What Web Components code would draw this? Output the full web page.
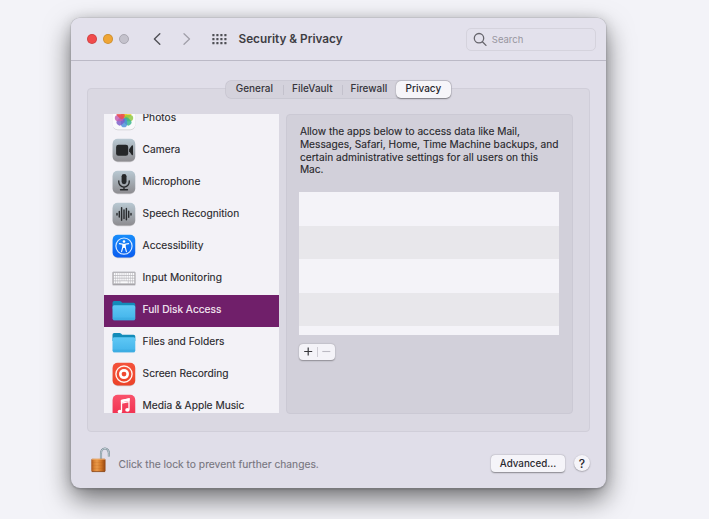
<!DOCTYPE html>
<html lang="en"><head><meta charset="utf-8"><title>Security &amp; Privacy</title>
<style>
html,body{margin:0;height:100%}
body{background:#f3f3f8;font-family:Inter,"Liberation Sans",sans-serif;overflow:hidden;padding:18px 0 0 71px;box-sizing:border-box;color:#29282e}
</style></head><body>
<prefs-window>
  <window-toolbar slot="toolbar" heading="Security &amp; Privacy"></window-toolbar>
  <tab-bar slot="tabs">
    <tab-item style="width:57px">General</tab-item>
    <tab-item style="width:59px" line>FileVault</tab-item>
    <tab-item style="width:54px" line>Firewall</tab-item>
    <tab-item style="width:55px" selected>Privacy</tab-item>
  </tab-bar>
  <side-list slot="side">
    <side-row icon="photos">Photos</side-row>
    <side-row icon="camera">Camera</side-row>
    <side-row icon="mic">Microphone</side-row>
    <side-row icon="speech">Speech Recognition</side-row>
    <side-row icon="access">Accessibility</side-row>
    <side-row icon="keyboard">Input Monitoring</side-row>
    <side-row icon="folder" selected>Full Disk Access</side-row>
    <side-row icon="folder">Files and Folders</side-row>
    <side-row icon="record">Screen Recording</side-row>
    <side-row icon="music">Media &amp; Apple Music</side-row>
  </side-list>
  <detail-pane slot="detail">Allow the apps below to access data like Mail,<br>Messages, Safari, Home, Time Machine backups, and<br>certain administrative settings for all users on this<br>Mac.</detail-pane>
  <window-footer slot="footer">Click the lock to prevent further changes.</window-footer>
</prefs-window>
<script>
const define=(name,html)=>customElements.define(name,class extends HTMLElement{
  connectedCallback(){
    if(this.shadowRoot)return;
    const root=this.attachShadow({mode:'open'});
    root.innerHTML=typeof html==='function'?html(this):html;
  }
});

const tile=(id,a,b,inner)=>`<svg width="24" height="25" viewBox="0 0 24 25"><defs><linearGradient id="${id}" x2="0" y2="1"><stop stop-color="${a}"/><stop offset="1" stop-color="${b}"/></linearGradient></defs><rect x=".8" y="1.6" width="22.4" height="22.7" rx="5" fill="#000" opacity=".16"/><rect x=".6" y=".8" width="22.6" height="22.6" rx="5" fill="url(#${id})"/>${inner}</svg>`;
const petals=['#f6a623','#e8d22e','#8cc63f','#35b58a','#4a90d9','#7a5cc8','#c05bb0','#ee4b4b'];
const keys=()=>{let s='';for(let r=0;r<4;r++)for(let c=0;c<10;c++){if(r===3&&c>2&&c<7)continue;s+=`<rect x="${(1.9+c*2.08).toFixed(2)}" y="${(7+r*2.75).toFixed(2)}" width="1.6" height="2" rx=".3"/>`}return s+'<rect x="8.2" y="15.25" width="7.7" height="2" rx=".3"/>'};
const icons={
  photos:()=>tile('g','#ffffff','#f8f8fa',`<g>${petals.map((c,i)=>`<rect x="8.9" y="2.9" width="6.2" height="9" rx="3.1" fill="${c}" opacity=".82" transform="rotate(${i*45} 12 12.1)"/>`).join('')}</g>`),
  camera:()=>tile('g','#b9c9d3','#8d8c90','<rect x="4.1" y="6.7" width="12.1" height="11" rx="2.3" fill="#252729"/><path d="M17.1 11.2 19.8 7.5Q21 6.7 21 8.2V16.2Q21 17.7 19.8 16.9L17.1 13.3Z" fill="#252729"/>'),
  mic:()=>tile('g','#b9c9d3','#8d8c90','<rect x="9.6" y="3.9" width="4.9" height="10.4" rx="2.45" fill="#252729"/><path d="M6.8 10.8v1.1a5.2 5.2 0 0 0 10.4 0v-1.1M12 17.2v2.4M8.5 19.7h7" fill="none" stroke="#252729" stroke-width="1.35" stroke-linecap="round"/>'),
  speech:()=>tile('g','#b9c9d3','#8d8c90','<path d="M5 11.4v1.6M7.3 9.4v5.6M9.6 5.6v12.6M12 8v8.6M14.4 6.4v11.4M16.7 9.2v6M19 11.4v1.6" fill="none" stroke="#292b2e" stroke-width="1.45" stroke-linecap="round"/>'),
  access:()=>tile('g','#188dfa','#0a5df0','<circle cx="12" cy="12.1" r="8.1" fill="none" stroke="#d8eaff" stroke-width="1.2"/><circle cx="12" cy="7.5" r="1.3" fill="#fff"/><path d="M7.4 9.6 10.9 10.3V12.7L9.6 17.6M16.6 9.6 13.1 10.3V12.7L14.4 17.6" fill="none" stroke="#fff" stroke-width="1.1" stroke-linecap="round"/><path d="M10.7 9.9h2.6v4h-2.6z" fill="#fff"/>'),
  keyboard:()=>`<svg width="24" height="25" viewBox="0 0 24 25"><rect x=".6" y="5.9" width="22.7" height="12.7" rx=".8" fill="#b9b8bd" stroke="#b0afb4" stroke-width=".6"/><path d="M.6 18.8h22.7" stroke="#929196" stroke-width=".8"/><g fill="#fafafc">${keys()}</g></svg>`,
  folder:()=>`<svg width="24" height="25" viewBox="0 0 24 25"><defs><linearGradient id="f" x2="0" y2="1"><stop stop-color="#5fc8f5"/><stop offset="1" stop-color="#42b3ea"/></linearGradient></defs><path d="M.5 4.7Q.5 3 2.2 3H7.6Q8.4 3 9 3.6L10.2 4.7H21.5Q23.3 4.7 23.3 6.5V11H.5Z" fill="#138bb9"/><path d="M.5 8.9Q.5 7.2 2.3 7.2H21.6Q23.3 7.2 23.3 8.9V20.6Q23.3 22.3 21.6 22.3H2.2Q.5 22.3.5 20.6Z" fill="url(#f)"/><path d="M.8 20.2h22.3M1 21.9h21.8" stroke="#319fd2" stroke-width=".5"/></svg>`,
  record:()=>tile('g','#f4523b','#ec4329','<circle cx="12" cy="12.1" r="8.1" fill="none" stroke="#fff3ee" stroke-width="1.4"/><circle cx="12" cy="12.1" r="5" fill="#fff"/><circle cx="12" cy="12.1" r="2.4" fill="#f0482f"/>'),
  music:()=>tile('g','#f9536c','#f02c4c','<path d="M9.5 17.3V6.5L17 4.9V15.6M9.5 9.2 17 7.6" fill="none" stroke="#fff" stroke-width="1.3"/><path d="M8.9 5.9 17.6 4.2V6.7L8.9 8.4Z" fill="#fff"/><ellipse cx="7.9" cy="17.5" rx="2.2" ry="1.8" fill="#fff"/><ellipse cx="15.4" cy="15.9" rx="2.2" ry="1.8" fill="#fff"/>')
};

define('prefs-window',`<style>
:host{display:flex;flex-direction:column;width:535.3px;height:470.3px;box-sizing:border-box;border-radius:9px;background:#e0dee9;box-shadow:0 0 0 .5px #aaa9b080,0 1px 2px #0004,0 11px 27px #0000008a,0 0 12px #0000001c}
main{margin:27px 16px 0 15.5px;height:344px;box-sizing:border-box;border:1px solid #d0ced9;border-radius:4px;background:#dad8e2;display:flex;flex-direction:column}
.tabs{display:flex;justify-content:center;margin-top:-9px;height:19px}
.cols{display:flex;gap:7px;margin:15px 15px 0 16.1px}
</style><slot name="toolbar"></slot><main><div class="tabs"><slot name="tabs"></slot></div><div class="cols"><slot name="side"></slot><slot name="detail"></slot></div></main><slot name="footer"></slot>`);

define('window-toolbar',el=>`<style>
:host{display:flex;align-items:center;height:43px;box-sizing:border-box;padding-left:16px;padding-right:10px;background:#e3e1ec;border-bottom:1px solid #bbb9c6;border-radius:9px 9px 0 0}
.dots{display:flex;gap:6px;margin-right:22px}
i{width:10px;height:10px;border-radius:50%;box-sizing:border-box;border:.5px solid #0002}
h1{font-size:11.78px;font-weight:600;margin:0 0 0 11.5px;color:#3e3d43;flex:1;white-space:nowrap}
.search{display:flex;align-items:center;box-sizing:border-box;width:130px;height:23px;border:1px solid #d5d3dd;border-radius:5px;padding-left:6px;gap:3.5px;font-size:9.5px;color:#98969f}
</style>
<div class="dots"><i style="background:#f14b4c"></i><i style="background:#efa535"></i><i style="background:#c4c2cc;border-color:#aaa8b2"></i></div>
<svg width="76" height="20" viewBox="0 0 76 20" fill="none"><path d="M8.8 4.8 3.4 10l5.4 5.2" stroke="#505056" stroke-width="1.4" stroke-linecap="round" stroke-linejoin="round"/><path d="M33 4.8 38.5 10l-5.5 5.2" stroke="#a19fa9" stroke-width="1.3" stroke-linecap="round" stroke-linejoin="round"/><g fill="#505056">${[5,9,13].map(y=>[62.3,66.3,70.3,74.3].map(x=>`<rect x="${x-1}" y="${y}" width="2.2" height="2.2" rx=".5"/>`).join('')).join('')}</g></svg>
<h1>${el.getAttribute('heading').replace('&','&amp;')}</h1>
<div class="search"><svg width="15" height="15" viewBox="0 0 15 15" fill="none" stroke="#66656c" stroke-width="1.3" stroke-linecap="round"><circle cx="6" cy="6.2" r="4.7"/><path d="m9.4 9.7 3.6 3.7"/></svg><span>Search</span></div>`);

define('tab-bar',`<style>:host{display:flex;box-sizing:border-box;height:17.5px;border-radius:5px;background:#d4d2dc;box-shadow:0 0 0 .7px #c5c3ce;margin-top:.5px}</style><slot></slot>`);
define('tab-item',`<style>
:host{display:flex;align-items:center;justify-content:center;box-sizing:border-box;height:17.5px;padding-bottom:2px;font-size:10px;font-weight:500;color:#36353b;border-radius:5px;position:relative}
:host([selected]){background:#f6f5f9;box-shadow:0 .5px 1.5px #0006;color:#29282e}
:host([line])::before{content:"";position:absolute;left:0;top:4px;width:1px;height:10px;background:#c3c1cc}
</style><slot></slot>`);

define('side-list',`<style>:host{display:block;width:175px;height:299px;background:#f3f2f7;overflow:hidden}div{margin-top:-11.5px}</style><div><slot></slot></div>`);
define('side-row',el=>`<style>
:host{display:flex;align-items:center;height:32px;padding-left:8px;gap:7px;font-size:10.22px;color:#28272b;-webkit-text-stroke:.12px}
:host([selected]){background:#701f6a;color:#f8f0f7}
svg{display:block;position:relative;top:-.1px}span{margin-top:-3.4px}
</style>${icons[el.getAttribute('icon')]()}<span><slot></slot></span>`);

define('detail-pane',`<style>
:host{display:block;box-sizing:border-box;width:287px;height:300px;border:1px solid #cbc9d4;border-radius:4px;background:#d2d0da;padding:10px 12px}
p{margin:0 0 0 1.3px;font-size:10.18px;line-height:12.8px;color:#28272b;white-space:nowrap;-webkit-text-stroke:.12px}
.table{width:260px;height:143px;margin-top:16px;background:repeating-linear-gradient(#f4f3f8 0 33.6px,#e8e7eb 33.6px 67.2px)}
.add{display:flex;width:36px;height:16px;border-radius:4px;background:#f4f3f8;box-shadow:0 .5px 1.5px #0005;margin-top:8.5px}
</style><p><slot></slot></p><div class="table"></div>
<div class="add"><svg width="36" height="16" viewBox="0 0 36 16"><path d="M5.2 7.5h8M9.2 3.5v8" stroke="#38373c" stroke-width="1.2"/><path d="M18.5 3v10" stroke="#cfcdd5" stroke-width="1"/><path d="M23.3 7.5h8" stroke="#bcbac3" stroke-width="1.1"/></svg></div>`);

define('window-footer',`<style>
:host{display:flex;align-items:center;height:32px;margin-top:14.5px;padding:0 16.3px 0 18px;font-size:10.25px;color:#77757e}
span{flex:1;margin-left:7.5px;padding-top:2px;-webkit-text-stroke:.1px}
.adv,.help{display:flex;align-items:center;justify-content:center;background:#f5f4f9;color:#29282e;box-shadow:0 .5px 1.5px #0006}
.adv{width:74px;height:16.5px;border-radius:4px;font-size:9.8px;font-weight:500;margin:1.5px 9px 0 0}
.help{width:16px;height:16px;margin-top:1px;border-radius:50%;font-size:12px;font-weight:500}
svg{margin-bottom:7px}
</style><svg width="22" height="28" viewBox="0 0 22 28"><defs><linearGradient id="b" x2="1"><stop stop-color="#a9551c"/><stop offset=".2" stop-color="#d98234"/><stop offset=".4" stop-color="#e9994a"/><stop offset=".7" stop-color="#cf7425"/><stop offset="1" stop-color="#914412"/></linearGradient></defs>
<path d="M12 14V8.2a3.9 4.6 0 0 1 7.9 0v3.3" fill="none" stroke="#70838d" stroke-width="2.1"/><path d="M12 14V8.2a3.9 4.6 0 0 1 7.9 0v3.3" fill="none" stroke="#cbd9de" stroke-width="1"/>
<rect x="2.3" y="13.8" width="14.2" height="13" rx="1.2" fill="url(#b)"/><path d="M2.8 14.3h13.2" stroke="#f0b070" stroke-width=".8"/><path d="M2.8 17.5h13.2M2.8 20.5h13.2M2.8 23.5h13.2" stroke="#a9561b" stroke-width=".4" opacity=".35"/><path d="M2.8 26.6h13.2" stroke="#7d3c12" stroke-width=".7"/></svg><span><slot></slot></span><div class="adv">Advanced...</div><div class="help">?</div>`);
</script></body></html>
